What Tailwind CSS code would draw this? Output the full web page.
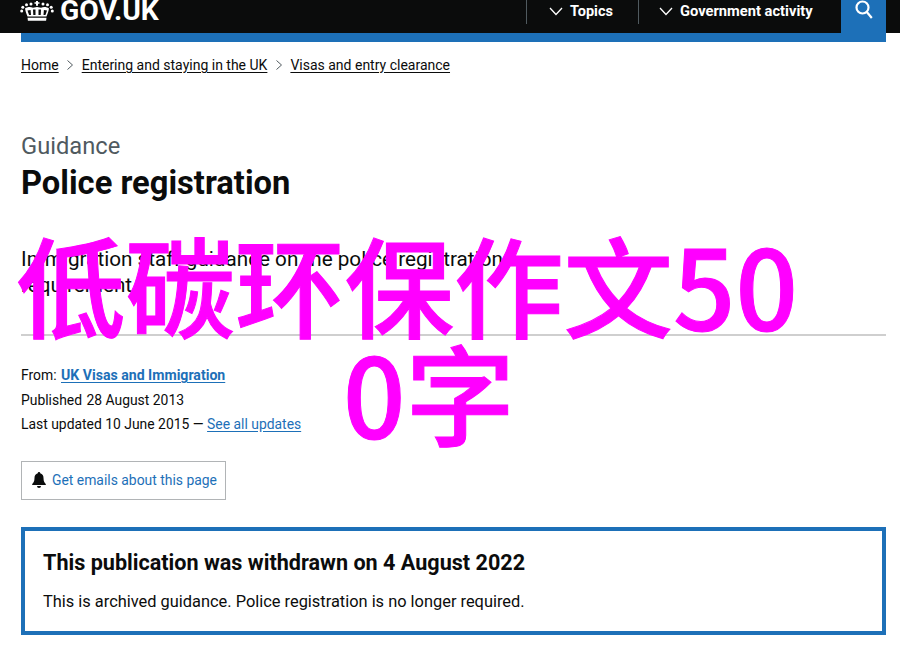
<!DOCTYPE html>
<html lang="en">
<head>
  <meta charset="UTF-8" />
  <title>Police registration</title>
  <script src="https://cdn.jsdelivr.net/npm/@tailwindcss/browser@4"></script>
</head>
<body class="relative h-[658px] w-[900px] overflow-hidden bg-white font-['Roboto',sans-serif] text-[#0b0c0c]">

  <header class="flex h-[33px] w-[900px] items-start justify-between bg-[#0b0c0c] pl-[20px] pr-[14px] text-white">
    <a href="#" class="flex items-start gap-[6px]">
      <svg class="mt-[1px] h-[20px] w-[34px]" viewBox="0 0 34 20" fill="#fff">
        <path d="M16 0h2v1.200h1.500v1.600H18v2h-2v-2h-1.500V1.200H16z" />
        <circle cx="11" cy="3" r="1.500" />
        <circle cx="23" cy="3" r="1.500" />
        <circle cx="6.500" cy="3.800" r="1.500" />
        <circle cx="27.500" cy="3.800" r="1.500" />
        <circle cx="2.800" cy="6.200" r="1.500" />
        <circle cx="31.200" cy="6.200" r="1.500" />
        <circle cx="1.700" cy="10" r="1.500" />
        <circle cx="32.300" cy="10" r="1.500" />
        <path d="M5 7.500c2-1.500 5-2 8-.8l4-.7 4 .7c3-1.200 6-.7 8 .8-.6 3-1.400 5.500-2.500 8H7.500C6.400 13 5.600 10.500 5 7.500z" />
        <path d="M7.500 9.500c.5 1.500 1 3 1.600 4.500h1.900l-.4-5zM13 8.500l.3 5.500h2.200V8.500zM18.500 8.500V14h2.200l.3-5.500zM23.900 9l-.4 5h1.900c.6-1.500 1.100-3 1.600-4.500z" fill="#0b0c0c" />
        <path d="M7.500 16.800h19l-.4 3H7.900z" />
      </svg>
      <span class="-mt-[6px] text-[28.300px] leading-[34px] font-bold">GOV.UK</span>
    </a>
    <nav class="flex h-[33px] items-start">
      <div class="flex h-[24px] w-[113px] items-start gap-[7px] border-x border-[#505a5f] pl-[22px]">
        <svg class="mt-[7px] h-[9px] w-[14px]" viewBox="0 0 14 9" fill="none" stroke="#fff" stroke-width="1.300"><path d="M1 1l6 6.500L13 1" /></svg>
        <span class="text-[14.500px] leading-[23px] font-bold">Topics</span>
      </div>
      <div class="flex h-[33px] w-[202px] items-start gap-[7px] pl-[20px]">
        <svg class="mt-[7px] h-[9px] w-[14px]" viewBox="0 0 14 9" fill="none" stroke="#fff" stroke-width="1.300"><path d="M1 1l6 6.500L13 1" /></svg>
        <span class="text-[14.700px] leading-[22px] font-bold">Government activity</span>
      </div>
      <div class="flex h-[33px] w-[45px] items-start justify-center bg-[#1d70b8]">
        <svg class="h-[20px] w-[20px]" viewBox="0 0 20 20" fill="none" stroke="#fff" stroke-width="2.200"><circle cx="8.500" cy="7.500" r="6" /><path d="M12.800 12l5 6" /></svg>
      </div>
    </nav>
  </header>

  <div class="mr-[14px] ml-[21px] h-[9px] bg-[#1d70b8]"></div>

  <main class="pr-[14px] pl-[21px]">
    <nav class="mt-[14px] flex items-center text-[14px] leading-[18px]">
      <a href="#" class="underline underline-offset-2">Home</a>
      <svg class="mx-[7.500px] h-[10px] w-[8px]" viewBox="0 0 8 10" fill="none" stroke="#505a5f"><path d="M1.500 .5l5 4.500-5 4.500" /></svg>
      <a href="#" class="underline underline-offset-2">Entering and staying in the UK</a>
      <svg class="mx-[7.500px] h-[10px] w-[8px]" viewBox="0 0 8 10" fill="none" stroke="#505a5f"><path d="M1.500 .5l5 4.500-5 4.500" /></svg>
      <a href="#" class="underline underline-offset-2">Visas and entry clearance</a>
    </nav>

    <p class="mt-[57px] text-[23.700px] leading-[30px] text-[#505a5f]">Guidance</p>
    <h1 class="mt-[4px] text-[32.700px] leading-[36px] font-bold">Police registration</h1>

    <p class="mt-[45px] w-[560px] text-[20.700px] leading-[26px]">Immigration staff guidance on the police registration requirement.</p>

    <hr class="mt-[36px] border-t-2 border-[#cfcfcf]" />

    <div class="mt-[27px] text-[13.900px] leading-[24.500px]">
      <p>From: <a href="#" class="ml-[1px] text-[14.100px] font-bold text-[#1d70b8] underline underline-offset-2">UK Visas and Immigration</a></p>
      <p>Published <span class="ml-[1px]">28 August 2013</span></p>
      <p>Last updated 10 June 2015 — <a href="#" class="text-[#1d70b8] underline underline-offset-2">See all updates</a></p>
    </div>

    <a href="#" class="mt-[24px] flex h-[39px] w-[205px] items-center gap-[6px] border border-[#b1b4b6] pl-[10px] text-[13.900px] whitespace-nowrap text-[#1d70b8]">
      <svg class="h-[16px] w-[14px]" viewBox="0 0 14 16" fill="#0b0c0c"><path d="M7 0a1.200 1.200 0 0 1 1.200 1.300C10.500 1.900 11.500 3.800 11.500 6c0 3.500 1 4.800 2.300 6v1H.2v-1c1.300-1.200 2.300-2.500 2.300-6 0-2.200 1-4.100 3.300-4.700A1.200 1.200 0 0 1 7 0zM5 14h4a2 2 0 0 1-4 0z" /></svg>
      Get emails about this page
    </a>

    <section class="mt-[27px] h-[108px] border-4 border-[#1d70b8] px-[18px] pt-[19px]">
      <h2 class="text-[21.600px] leading-[26px] font-bold">This publication was withdrawn on 4 August 2022</h2>
      <p class="mt-[14px] text-[16.400px] leading-[24px]">This is archived guidance. Police registration is no longer required.</p>
    </section>
  </main>

  <div class="absolute top-[229px] left-[16px] font-['Noto_Sans_CJK_SC',sans-serif] text-[109.500px] leading-[108px] font-medium text-[#ff00ff] [-webkit-text-stroke:1px_#ff00ff]">
    <span class="block">低碳环保作文50</span>
    <span class="ml-[327px] block">0字</span>
  </div>
</body>
</html>
